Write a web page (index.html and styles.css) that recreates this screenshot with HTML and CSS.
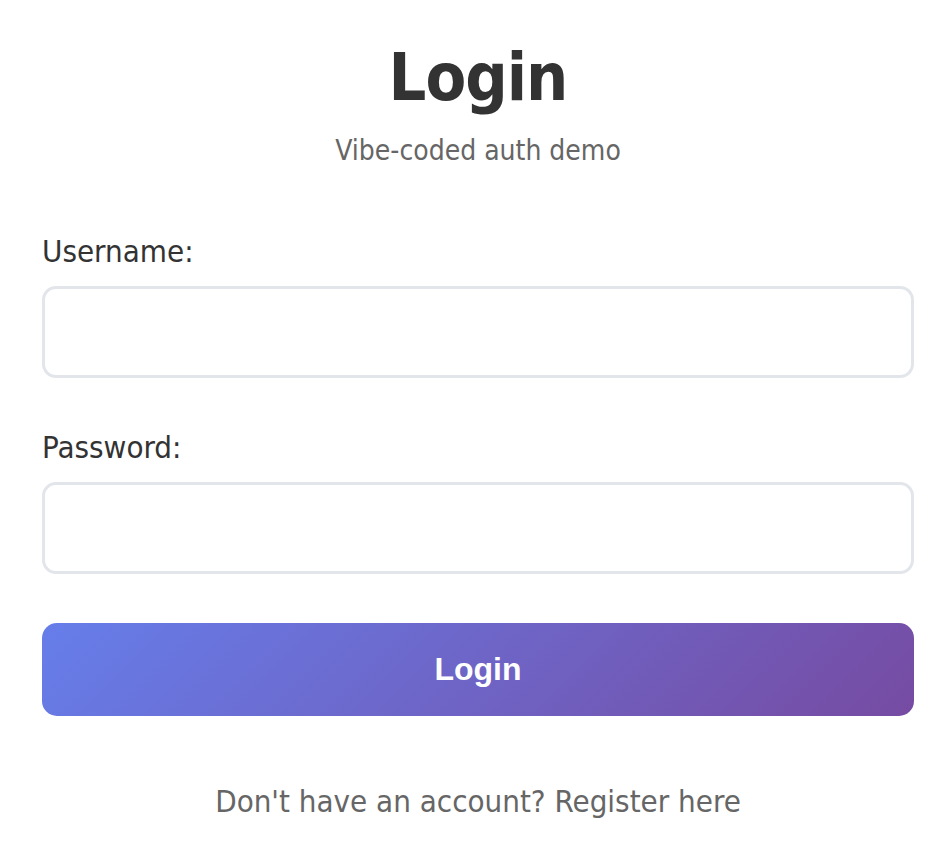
FILE: index.html
```html
<!DOCTYPE html>
<html lang="en">
<head>
    <meta charset="UTF-8">
    <title>Login</title>
    <link rel="stylesheet" href="styles.css">
</head>
<body>
    <div class="container">
        <h1>Login</h1>
        <p class="subtitle">Vibe-coded auth demo</p>

        <!-- login form -->
        <form id="login-form">
            <div class="form-group">
                <label for="username">Username:</label>
                <input type="text" id="username">
            </div>
            <div class="form-group">
                <label for="password">Password:</label>
                <input type="password" id="password">
            </div>
            <button type="submit" id="login-button">Login</button>
        </form>

        <p class="switch-link">Don't have an account? <a href="#">Register here</a></p>
    </div>
</body>
</html>
```

FILE: styles.css
```css
body {
    font-family: "DejaVu Sans Condensed", "DejaVu Sans", sans-serif;
    margin: 0;
    background: #fff;
    color: #333;
}
.container {
    padding: 40px 38px 0 42px;
}
h1 {
    font-size: 66px;
    font-weight: bold;
    letter-spacing: -1px;
    text-align: center;
    margin: 0;
    line-height: 76px;
    color: #333;
}
.subtitle {
    text-align: center;
    color: #666;
    font-size: 28px;
    line-height: 34px;
    margin: 18px 0 0 0;
}
/* form */
#login-form {
    margin-top: 65px;
}
.form-group {
    margin-bottom: 51px;
}
.form-group:last-of-type {
    margin-bottom: 49px;
}
.form-group label {
    display: block;
    font-size: 31px;
    line-height: 36px;
    margin-bottom: 17px;
    color: #333;
}
.form-group input {
    display: block;
    box-sizing: border-box;
    width: 100%;
    height: 92px;
    border: 3px solid #e2e5ea;
    border-radius: 14px;
    padding: 10px 20px;
    font-size: 28px;
    outline: none;
}
#login-button {
    display: block;
    width: 100%;
    height: 93px;
    margin-top: 0;
    border: none;
    border-radius: 15px;
    background: linear-gradient(135deg, #667eea 0%, #764ba2 100%);
    color: white;
    font-family: "Liberation Sans", Arial, sans-serif;
    font-size: 32px;
    font-weight: bold;
    cursor: pointer;
}
.switch-link {
    text-align: center;
    color: #666;
    font-size: 31px;
    line-height: 36px;
    margin-top: 67px;
}
.switch-link a {
    color: #666;
    text-decoration: none;
}
```
